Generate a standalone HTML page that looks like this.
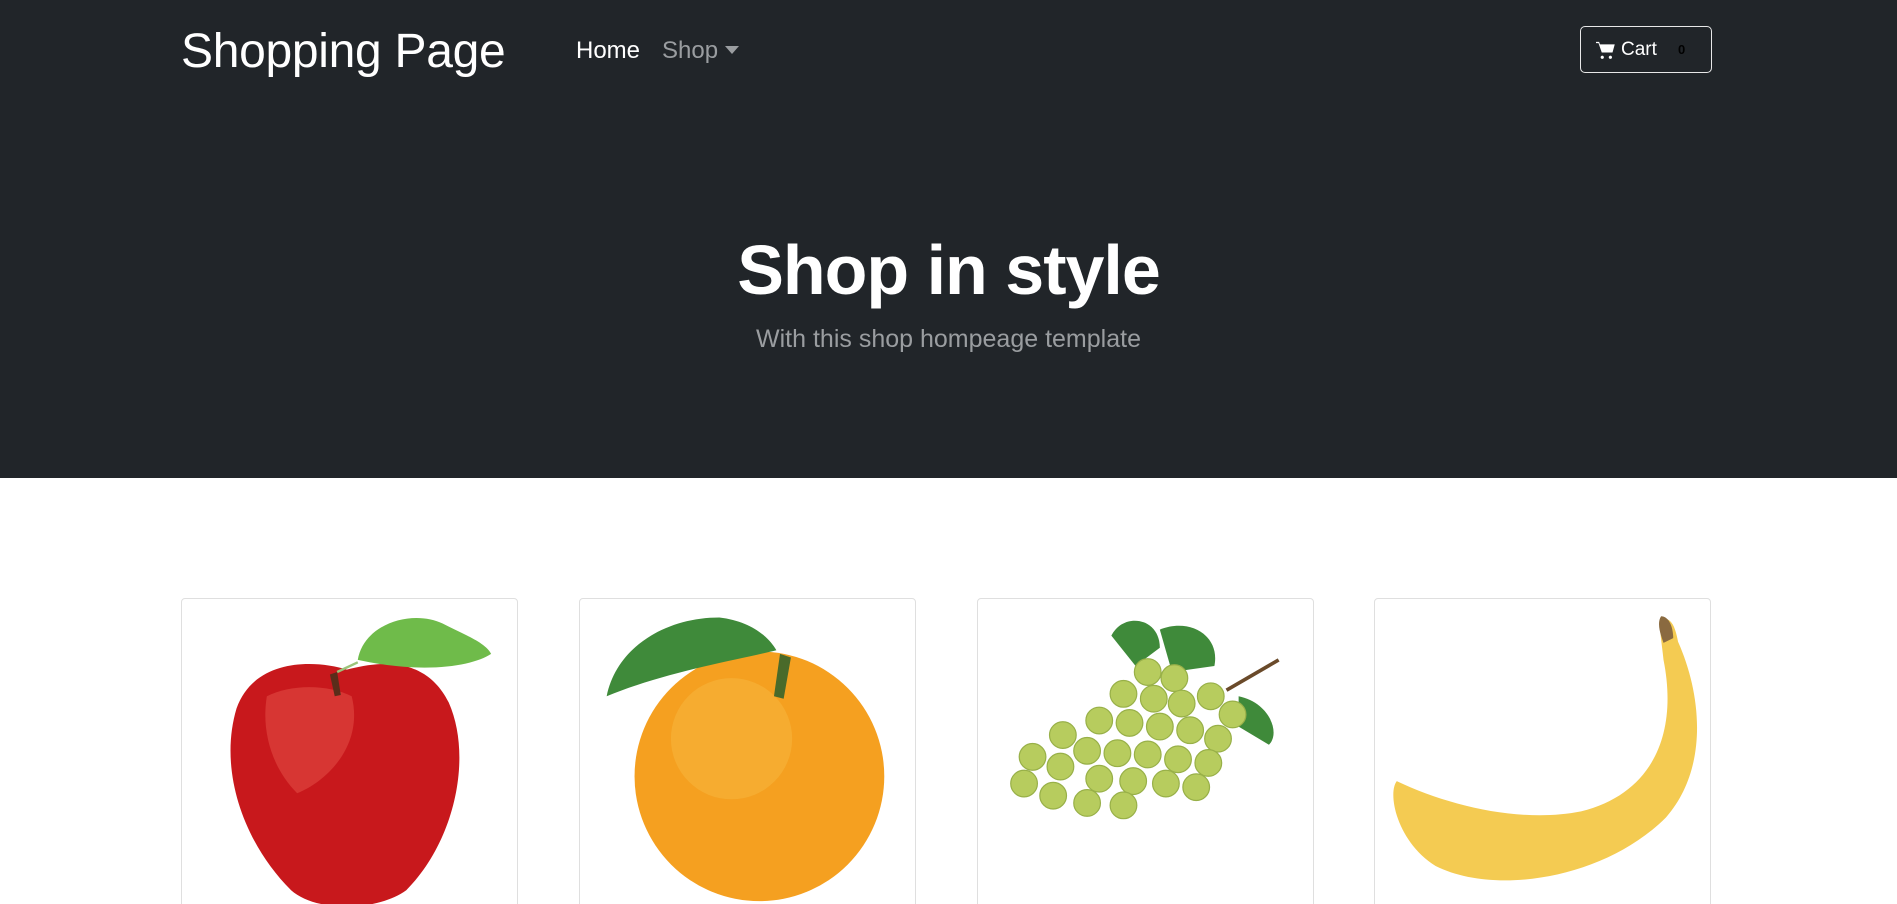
<!DOCTYPE html>
<html style="height:904px;overflow:hidden"><head><meta charset="utf-8"><style>
*{margin:0;padding:0;box-sizing:border-box}
body{width:1897px;height:904px;overflow:hidden;background:#fff;font-family:"Liberation Sans",sans-serif}
#wrap{position:relative;width:1897px;height:904px;overflow:hidden}
.top{background:#212529;height:478px;position:relative}
.brand{position:absolute;left:181px;top:24px;font-size:48px;color:#fff;letter-spacing:-0.3px}
.nav{position:absolute;top:37px;font-size:24px}
.cart{position:absolute;left:1580px;top:26px;width:132px;height:47px;border:1px solid #e8e8e8;border-radius:5px;color:#fff;font-size:19px}
h1{position:absolute;left:0;right:0;top:230px;text-align:center;color:#fff;font-size:70px;font-weight:bold;letter-spacing:-1px}
.sub{position:absolute;left:0;right:0;top:325px;text-align:center;color:#9a9da0;font-size:25px}
.card{position:absolute;top:598px;width:337px;height:340px;border:1px solid #dfdfdf;border-radius:4px;overflow:hidden;background:#fff}
.card svg{position:absolute;left:0;top:0}
</style></head><body><div id="wrap">
<div class="top">
<div class="brand">Shopping Page</div>
<div class="nav" style="left:576px;color:#fff">Home</div>
<div class="nav" style="left:662px;color:#9a9da0">Shop <span style="display:inline-block;width:0;height:0;border-left:7px solid transparent;border-right:7px solid transparent;border-top:8px solid #9a9da0;vertical-align:4px"></span></div>
<div class="cart">
<svg width="20" height="20" viewBox="0 0 16 16" style="position:absolute;left:15px;top:13px"><path fill="#fff" d="M0 1.5h2.5l.6 2H15l-1.8 6.5H4.6L2 2.5H0z M5 12.5a1.3 1.3 0 1 0 .01 0z M11.5 12.5a1.3 1.3 0 1 0 .01 0z"/></svg>
<span style="position:absolute;left:40px;top:12px">Cart</span>
<span style="position:absolute;left:97px;top:15px;color:#000;font-size:13px;font-weight:bold">0</span>
</div>
<h1>Shop in style</h1>
<div class="sub">With this shop hompeage template</div>
</div>

<div class="card" style="left:181px"><svg width="337" height="340" viewBox="0 0 278 280">
<path d="M136 58 C110 50 60 48 45 90 C30 140 50 200 90 240 C110 258 160 258 185 240 C225 200 240 130 220 85 C200 45 160 52 136 58Z" fill="#c8181c"/>
<path d="M70 80 C90 70 120 70 140 80 C150 120 120 150 95 160 C75 140 65 110 70 80Z" fill="#e85a50" opacity=".45"/>
<path d="M122 62 L126 80 L131 79 L128 60Z" fill="#5a2d1a"/>
<path d="M128 60 L145 52" stroke="#9bc47a" stroke-width="2"/>
<path d="M145 50 C150 20 190 8 215 20 C230 28 250 35 255 45 C240 55 200 62 145 50Z" fill="#6fbb4a"/>
</svg></div>

<div class="card" style="left:579px"><svg width="337" height="340" viewBox="0 0 278 280">
<circle cx="148" cy="146" r="103" fill="#f5a020"/>
<circle cx="125" cy="115" r="50" fill="#f8b840" opacity=".5"/>
<path d="M165 45 L160 80 L168 82 L174 48Z" fill="#4a6a2a"/>
<path d="M22 80 C30 40 70 15 115 15 C140 18 155 30 162 42 C130 50 70 60 22 80Z" fill="#3f8a3a"/>
</svg></div>

<div class="card" style="left:977px"><svg width="337" height="340" viewBox="0 0 278 280">
<g fill="#3f8a3a"><path d="M110 30 C120 10 150 15 150 40 L130 55Z"/><path d="M150 25 C175 15 200 30 195 55 L160 60Z"/><path d="M215 80 C240 85 250 110 240 120 L215 105Z"/></g>
<path d="M205 75 L248 50" stroke="#6a4a2a" stroke-width="3"/>
<g fill="#b7cc5e" stroke="#98b048" stroke-width="1">
<circle cx="140" cy="60" r="11"/><circle cx="162" cy="65" r="11"/><circle cx="120" cy="78" r="11"/><circle cx="145" cy="82" r="11"/><circle cx="168" cy="86" r="11"/><circle cx="192" cy="80" r="11"/><circle cx="210" cy="95" r="11"/>
<circle cx="100" cy="100" r="11"/><circle cx="125" cy="102" r="11"/><circle cx="150" cy="105" r="11"/><circle cx="175" cy="108" r="11"/><circle cx="198" cy="115" r="11"/>
<circle cx="70" cy="112" r="11"/><circle cx="90" cy="125" r="11"/><circle cx="115" cy="127" r="11"/><circle cx="140" cy="128" r="11"/><circle cx="165" cy="132" r="11"/><circle cx="190" cy="135" r="11"/>
<circle cx="45" cy="130" r="11"/><circle cx="68" cy="138" r="11"/><circle cx="100" cy="148" r="11"/><circle cx="128" cy="150" r="11"/><circle cx="155" cy="152" r="11"/><circle cx="180" cy="155" r="11"/>
<circle cx="38" cy="152" r="11"/><circle cx="62" cy="162" r="11"/><circle cx="90" cy="168" r="11"/><circle cx="120" cy="170" r="11"/>
</g></svg></div>

<div class="card" style="left:1374px"><svg width="337" height="340" viewBox="0 0 278 280">
<path d="M240 16 C232 14 236 30 238 50 C250 110 230 160 170 175 C120 185 60 170 18 150 C10 160 18 200 50 220 C100 245 190 230 240 180 C275 140 270 80 250 35 C248 25 246 18 240 16Z" fill="#f4cb52"/>
<path d="M236 14 C232 20 236 30 238 36 L246 32 C246 22 242 14 236 14Z" fill="#8a6a40"/>
</svg></div>
</div></body></html>
